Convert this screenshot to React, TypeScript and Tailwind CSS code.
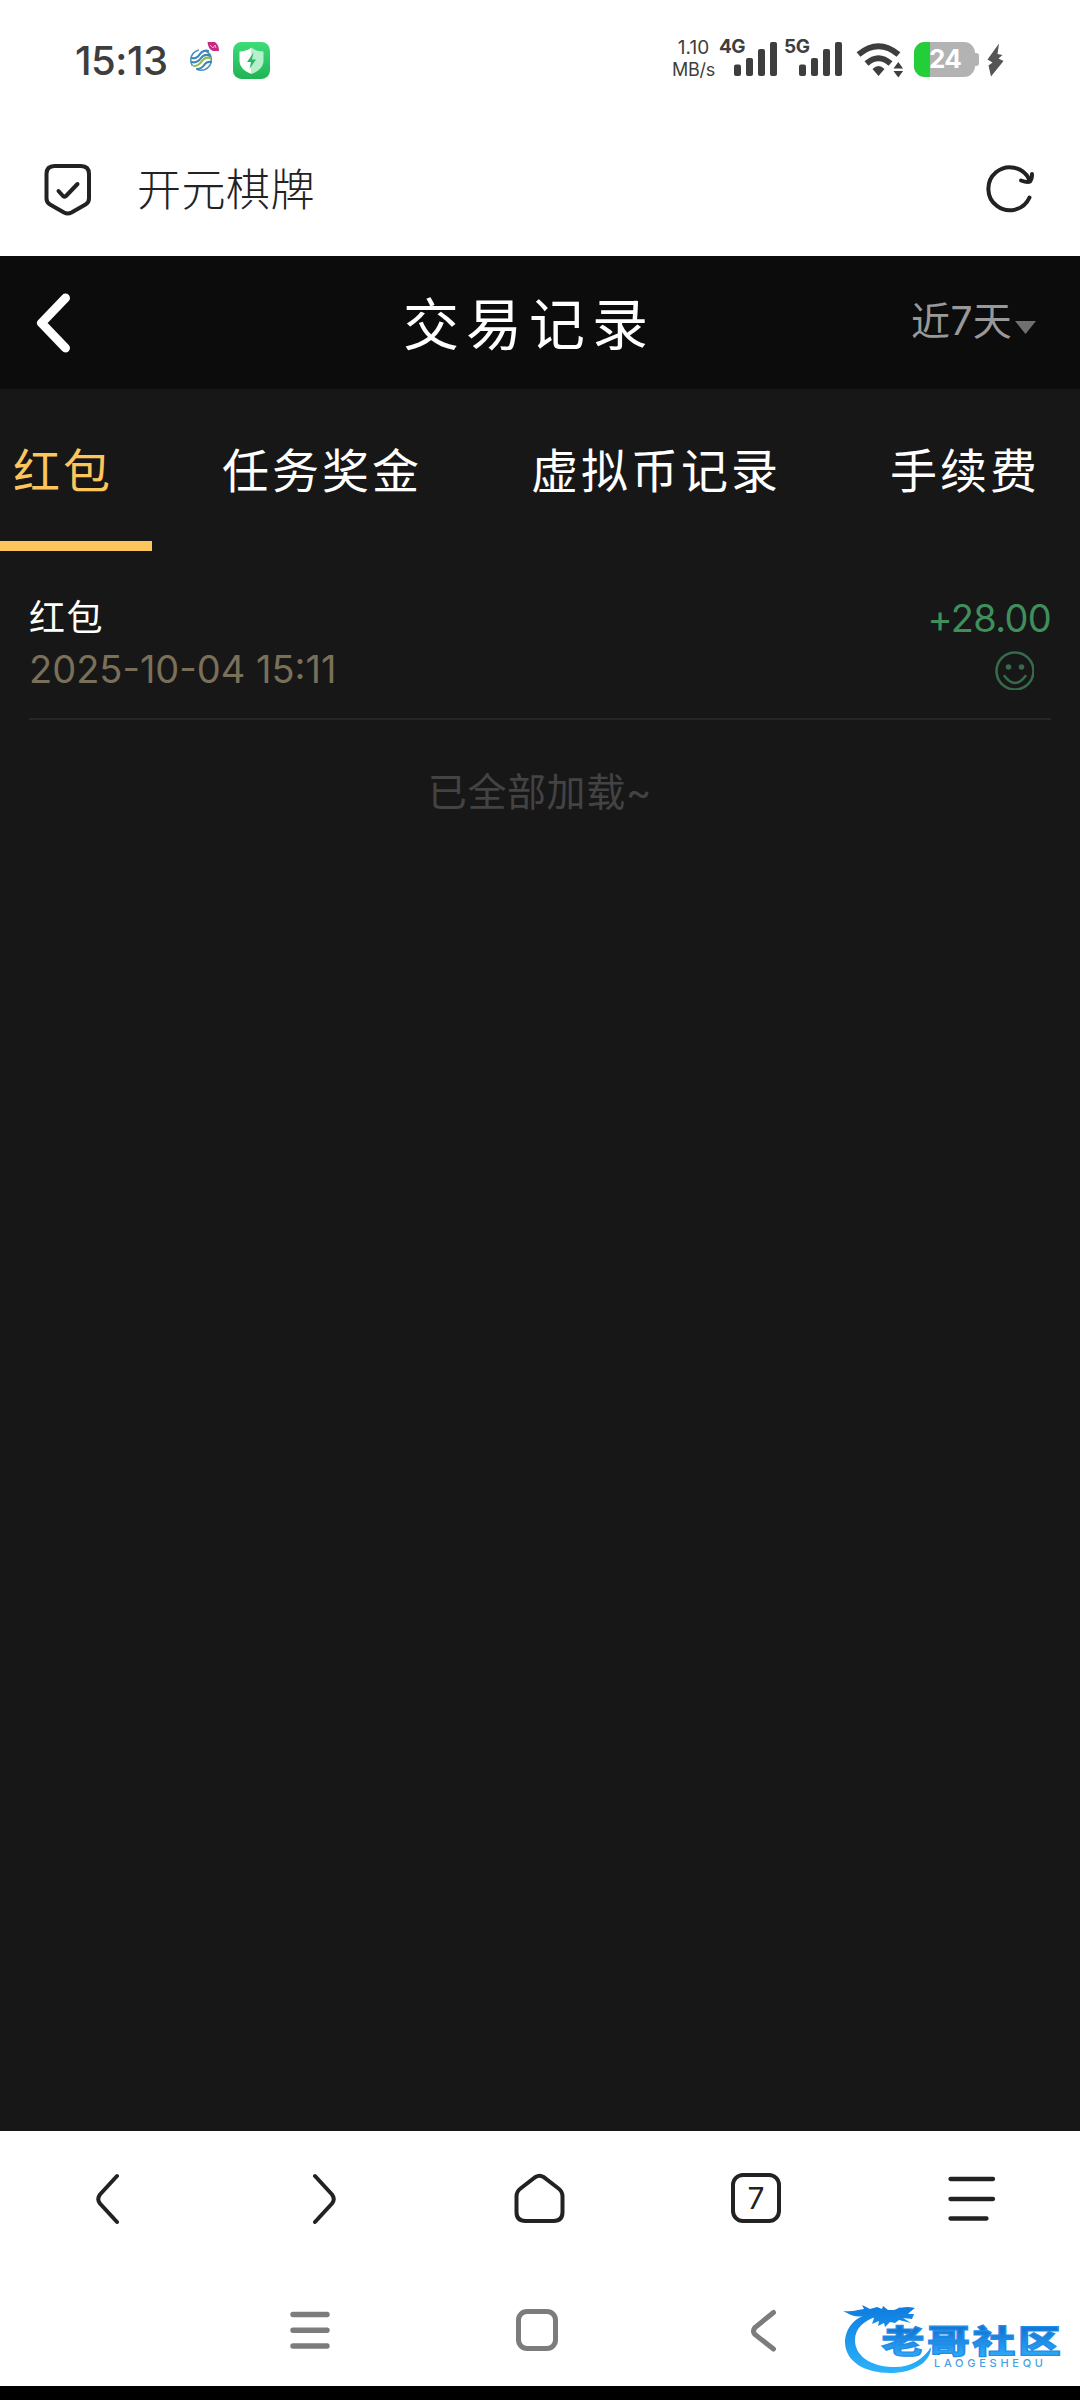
import React from 'react';

interface TabItem {
  label: string;
  active?: boolean;
  className: string;
}

interface RecordItem {
  title: string;
  time: string;
  amount: string;
}

const TABS: TabItem[] = [
  { label: '红包', active: true, className: 'w-[152px] pl-[13px]' },
  { label: '任务奖金', className: 'w-[308px] pl-[70px]' },
  { label: '虚拟币记录', className: 'w-[360px] pl-[71px]' },
  { label: '手续费', className: 'w-[260px] pl-[70px]' },
];

const RECORDS: RecordItem[] = [
  { title: '红包', time: '2025-10-04 15:11', amount: '+28.00' },
];

const SignalBars = ({ label }: { label: string }) => (
  <div className="relative h-[37px] w-[58px]">
    <span className="absolute left-0 top-0 text-[19px] leading-[16px] font-bold tracking-tight">{label}</span>
    <svg className="absolute left-[15px] top-[3px]" width="43" height="34" viewBox="0 0 43 34" fill="currentColor">
      <rect x="0" y="22.5" width="7" height="11.5" rx="2" />
      <rect x="12" y="16" width="7" height="18" rx="2" />
      <rect x="24" y="7" width="7" height="27" rx="2" />
      <rect x="36" y="0" width="7" height="34" rx="2" />
    </svg>
  </div>
);

const StatusBar = () => (
  <div className="h-[120px] flex items-start text-[#3e3e3e] shrink-0">
    <span className="ml-[75px] mt-[38px] w-[114px] text-[40px] leading-[45px] font-medium tracking-[-0.500px] whitespace-nowrap">15:13</span>

    {/* Carrier badge */}
    <svg className="mt-[38px]" width="32" height="38" viewBox="189 38 32 38" fill="none">
      <circle cx="201" cy="60" r="10.3" stroke="#4b93bd" strokeWidth="1.6" strokeDasharray="20 6" />
      <g strokeWidth="2.2" strokeLinecap="round">
        <path d="M192 58c3 1 6-1 8-4s6-4 8-3" stroke="#3b86b8" />
        <path d="M192 62c4 1 7-1 9-4s6-4 9-2" stroke="#3b86b8" />
        <path d="M194 66c4 0 6-2 8-5s5-4 8-3" stroke="#8dbf45" />
        <path d="M197 69c4 0 6-2 8-5s4-2 6-2" stroke="#3b86b8" />
      </g>
      <path d="M207.500 42h7.500q4 3 4 9h-6q-5-2-5.500-9z" fill="#c42b80" />
      <path d="M210 45l3 3 2-3 1 3" stroke="#f0b4d4" strokeWidth="1" />
    </svg>

    {/* Battery manager badge */}
    <svg className="ml-[12px] mt-[42px]" width="37" height="37" viewBox="0 0 37 37">
      <defs>
        <linearGradient id="guard" x1="0" y1="0" x2="0" y2="1">
          <stop offset="0" stopColor="#3ddc79" />
          <stop offset="1" stopColor="#1fb455" />
        </linearGradient>
      </defs>
      <rect width="37" height="37" rx="8.500" fill="url(#guard)" />
      <path d="M18.500 5.500c3 2.500 7 3.800 12 4v9c0 6-4 10.500-12 13.500z" fill="#b5efcb" />
      <path d="M18.500 5.500c-3 2.500-7 3.800-12 4v9c0 6 4 10.500 12 13.500z" fill="#fff" />
      <path d="M20.500 10.500l-6.500 9.500h4l-1.500 7 6.500-9.500h-4z" fill="#2cb864" />
    </svg>

    <div className="ml-[402px] mt-[37px] w-[43px] flex flex-col items-center">
      <span className="text-[19px] leading-[21px]">1.10</span>
      <span className="text-[18px] leading-[24px] tracking-[-0.300px]">MB/s</span>
    </div>

    <div className="ml-[4px] mt-[39px] flex gap-[7px]">
      <SignalBars label="4G" />
      <SignalBars label="5G" />
    </div>

    <svg className="ml-[14px] mt-[42px]" width="49" height="36" viewBox="856 42 49 36" fill="none">
      <path d="M858.500 54.500Q878.500 38 898.500 54.500" stroke="currentColor" strokeWidth="6" />
      <path d="M866.500 63.500Q878.500 53 890.500 63.500" stroke="currentColor" strokeWidth="6" />
      <path d="M872.500 69Q878.500 63 884.500 69L878.500 76z" fill="currentColor" />
      <path d="M893.500 68.500l4.800-6.500 4.800 6.500zM893.500 71l4.800 6.500 4.800-6.500z" fill="currentColor" />
    </svg>

    {/* Battery level */}
    <div className="ml-[9px] mt-[42px] flex items-center">
      <div className="relative h-[35px] w-[61px] overflow-hidden rounded-[11px] bg-[#b3b3b3]">
        <div className="h-full w-[16px] bg-[#22cf38]" />
        <span className="absolute left-[15px] top-0 text-[26px] leading-[34px] font-bold tracking-tight text-white">24</span>
      </div>
      <div className="h-[13px] w-[4px] rounded-r-[3px] bg-[#b3b3b3]" />
    </div>
    <svg className="ml-[8px] mt-[43px]" width="17" height="34" viewBox="0 0 17 34" fill="#555">
      <path d="M12 0.500L0.500 16.500l5 3L1.500 22.500l2.500 11L16.500 18l-5-2.500L15.500 12l-5-1z" />
    </svg>
  </div>
);

const AddressBar = () => (
  <div className="h-[136px] flex items-start text-[#222] shrink-0">
    <svg className="ml-[43px] mt-[43px]" width="49" height="54" viewBox="43 163 49 54" fill="none" stroke="currentColor" strokeWidth="4" strokeLinecap="round" strokeLinejoin="round">
      <path d="M54.500 166h26.500q8 0 8 8v24.500q0 4-3.500 6l-14 8q-3.800 2-7.500 0l-14-8q-3.500-2-3.500-6v-24.500q0-8 8-8z" />
      <path d="M58.500 191l4.500 5q1.500 1.300 3 0l11.500-12" />
    </svg>
    <span className="ml-[45px] mt-[38px] text-[44px] leading-[64px] font-light tracking-[0.500px]">开元棋牌</span>
    <svg className="ml-auto mr-[43px] mt-[43px]" width="53" height="53" viewBox="984 163 53 53" fill="none" stroke="currentColor" strokeWidth="4" strokeLinecap="round" strokeLinejoin="round">
      <path d="M1029.500 197.500A21.500 21.500 0 1 1 1029 179" />
      <path d="M1032 174q0 5-2 7.500-2.500 1.500-9-1" />
    </svg>
  </div>
);

const PageHeader = () => (
  <div className="h-[133px] flex items-start bg-[#0c0c0c] text-white shrink-0">
    <svg className="ml-[36px] mt-[37px]" width="35" height="60" viewBox="0 0 35 60" fill="none" stroke="currentColor" strokeWidth="9" strokeLinecap="round" strokeLinejoin="round">
      <path d="M29.500 5L5.500 30l24 25" />
    </svg>
    <h1 className="ml-[332px] mt-[29px] w-[500px] text-[56px] leading-[80px] tracking-[7px] whitespace-nowrap">交易记录</h1>
    <div className="ml-[8px] mt-[38px] flex items-start text-[#999] whitespace-nowrap">
      <span className="w-[104px] text-[39px] leading-[54px] tracking-[0.400px]">近7天</span>
      <svg className="mt-[27px]" width="21" height="13" viewBox="0 0 21 13">
        <path d="M0 0h21L10.500 13z" fill="#707070" />
      </svg>
    </div>
  </div>
);

const TabBar = () => (
  <div className="h-[162px] flex shrink-0">
    {TABS.map((tab) => (
      <div
        key={tab.label}
        className={`h-full flex flex-col justify-between whitespace-nowrap border-b-[10px] text-[47px] tracking-[3px] shrink-0 ${tab.className} ${tab.active ? 'border-[#fdc65c] text-[#fdc65c]' : 'border-transparent text-white'}`}
      >
        <span className="mt-[48px] leading-[68px]">{tab.label}</span>
      </div>
    ))}
  </div>
);

const RecordRow: React.FC<{ item: RecordItem }> = ({ item }) => (
  <div className="ml-[29px] mr-[29px] flex h-[169px] justify-between border-b-2 border-[#262626] pt-[40px]">
    <div className="flex flex-col">
      <span className="text-[36px] leading-[54px] tracking-[1.500px] text-white">{item.title}</span>
      <span className="text-[38px] leading-[48px] text-[#7a7059]">{item.time}</span>
    </div>
    <div className="flex flex-col items-end">
      <span className="text-[38px] leading-[54px] tracking-[-0.700px] text-[#3f8f5c]">{item.amount}</span>
      <svg className="mr-[17px] mt-[6px]" width="39" height="39" viewBox="0 0 39 39" fill="none" stroke="#356b4b" strokeWidth="2.600">
        <circle cx="20" cy="20" r="18.500" />
        <circle cx="13.500" cy="16" r="2.800" fill="#356b4b" stroke="none" />
        <circle cx="26.500" cy="16" r="2.800" fill="#356b4b" stroke="none" />
        <path d="M9.500 25q10.500 14 21 0" strokeLinecap="round" />
      </svg>
    </div>
  </div>
);

const BrowserToolbar = () => (
  <div className="h-[136px] flex items-start bg-white pt-[41px] text-[#222] shrink-0">
    <svg className="ml-[95px]" width="26" height="54" viewBox="0 0 26 54" fill="none" stroke="currentColor" strokeWidth="4" strokeLinecap="round">
      <path d="M22 4L5 22.500q-3.500 4.500 0 9L22 50" />
    </svg>
    <svg className="ml-[190px]" width="26" height="54" viewBox="0 0 26 54" fill="none" stroke="currentColor" strokeWidth="4" strokeLinecap="round">
      <path d="M4 4L21 22.500q3.500 4.500 0 9L4 50" />
    </svg>
    <svg className="ml-[176px]" width="53" height="54" viewBox="0 0 53 54" fill="none" stroke="currentColor" strokeWidth="4">
      <path d="M22.500 5q4-2.500 8 0l15 11.500q4 3 4 8v15.500q0 9-9 9h-28q-9 0-9-9v-15.500q0-5 4-8z" />
    </svg>
    <div className="ml-[165px] mt-[1px] flex h-[50px] w-[50px] items-center justify-center rounded-[12px] border-4 border-[#222] text-[30px]">7</div>
    <svg className="ml-[167px]" width="48" height="54" viewBox="0 0 48 54" fill="none" stroke="currentColor" strokeWidth="4.300" strokeLinecap="round">
      <path d="M2.500 7h42.500M2.500 27h42.500M2.500 46.500h36" />
    </svg>
  </div>
);

// Watermark in the bottom right corner
const CommunityLogo = () => (
  <svg className="ml-[64px] mt-[32px] overflow-visible" width="225" height="80" viewBox="840 2299 225 80">
    <defs>
      <linearGradient id="ring" x1="0" y1="2305" x2="0" y2="2374" gradientUnits="userSpaceOnUse">
        <stop offset="0" stopColor="#0d7be0" />
        <stop offset="1" stopColor="#2cb4fb" />
      </linearGradient>
      <linearGradient id="word" x1="0" y1="0" x2="0" y2="1">
        <stop offset="0.200" stopColor="#1577d6" />
        <stop offset="0.900" stopColor="#2fabf8" />
      </linearGradient>
    </defs>
    <g fill="url(#ring)">
      <path d="M872 2313C854 2316 844 2328 844 2343C845 2362 864 2373 889 2373C911 2373 930 2363 930 2347C922 2360 908 2368 891 2367C868 2366 854 2355 854 2340C854 2329 862 2320 880 2315Z" />
      <path d="M842 2311q8 1 15-1l6-1-2-4 8 4 7-2 5 2 1-3 5 4 8 0 4-3-1 4 6 0 8-2-5 5 6 0-2 5-9-1 8 5-12-3-4 3-5-1-5 5-1-4-6 3 1-5-7 3 2-6-7-3q-7 3-16 0z" />
      <path d="M893 2310q10-5 21-2l-4 3-12 2z" />
    </g>
    <text transform="translate(880.500 2353) scale(1.360 1)" fill="url(#word)" stroke="#1f8de8" strokeWidth="1.200" fontSize="31.500" fontWeight="900" letterSpacing="2">老哥社区</text>
    <text x="933" y="2367" fill="#4a9fe0" fontSize="11" textLength="109" className="font-medium">LAOGESHEQU</text>
  </svg>
);

const SystemNav = () => (
  <div className="h-[119px] flex items-start bg-white text-[#7c7c7c] shrink-0">
    <svg className="ml-[290px] mt-[42px]" width="40" height="42" viewBox="0 0 40 42" fill="none" stroke="currentColor" strokeWidth="5.400" strokeLinecap="round">
      <path d="M3 5.500h34M3 21.200h34M3 37h34" />
    </svg>
    <div className="ml-[186px] mt-[42px] h-[42px] w-[42px] rounded-[11px] border-5 border-[#7c7c7c]" />
    <svg className="ml-[192px] mt-[42px]" width="27" height="44" viewBox="0 0 27 44" fill="none" stroke="currentColor" strokeWidth="5" strokeLinecap="round">
      <path d="M23.500 3.500L5 18.500q-3 3.500 0 7L23.500 40" />
    </svg>
    <CommunityLogo />
  </div>
);

export default function App() {
  return (
    <div className="flex h-[2400px] w-[1080px] flex-col overflow-hidden bg-white font-['Inter','Noto_Sans_CJK_SC',sans-serif]">
      <StatusBar />
      <AddressBar />
      <PageHeader />
      <main className="flex-1 flex flex-col bg-[#171717]">
        <TabBar />
        {RECORDS.map((item) => (
          <RecordRow key={item.time} item={item} />
        ))}
        <p className="mt-[44px] text-center text-[39px] leading-[56px] tracking-[0.600px] text-[#434343]">已全部加载~</p>
      </main>
      <BrowserToolbar />
      <SystemNav />
      <div className="h-[14px] bg-black shrink-0" />
    </div>
  );
}
